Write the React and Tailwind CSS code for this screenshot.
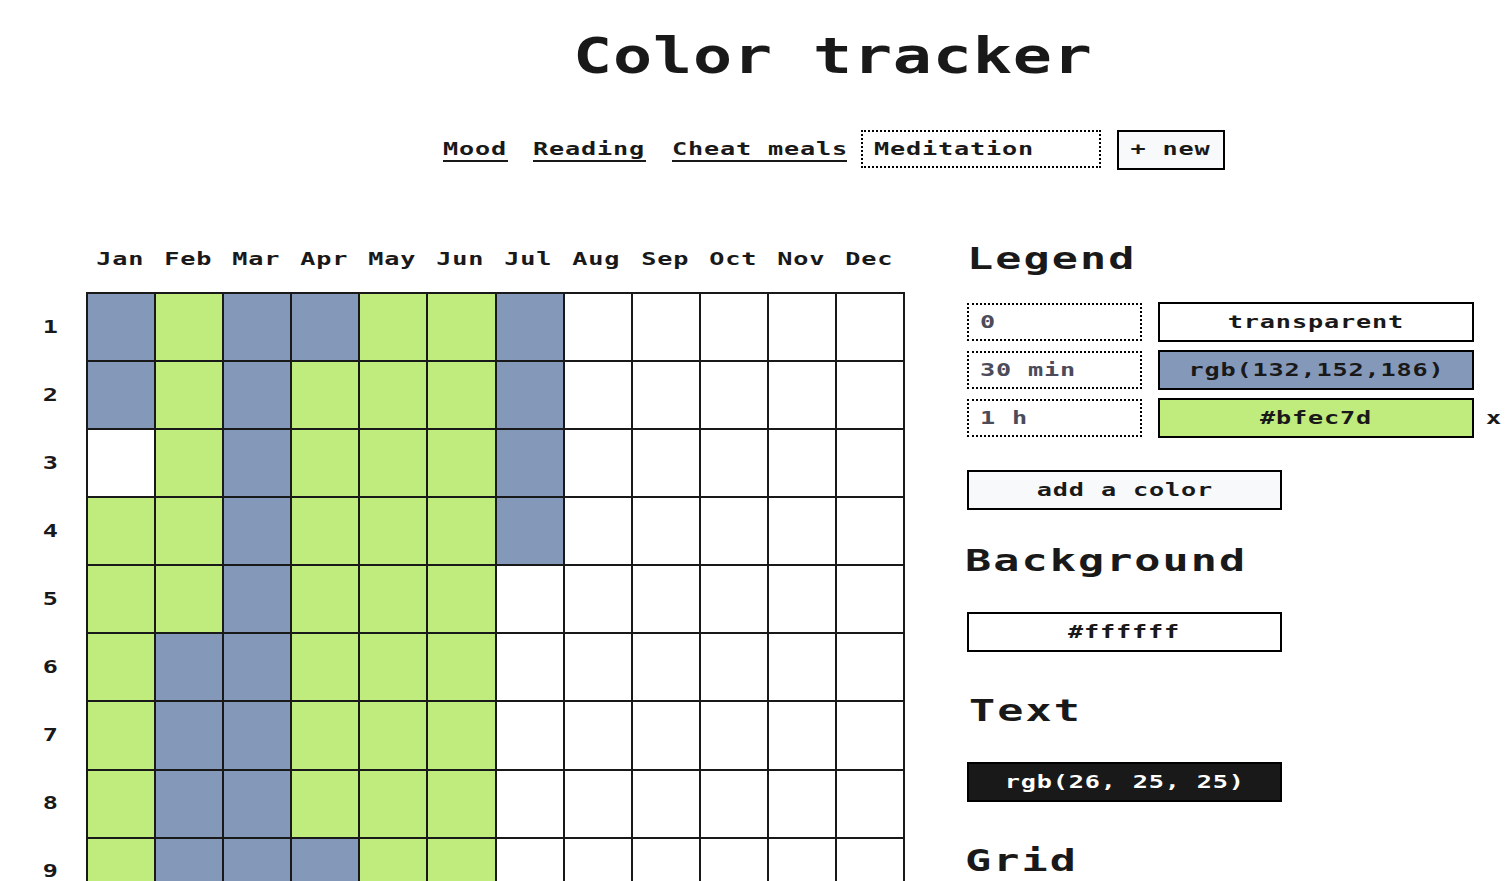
const BLUE = 'bg-[#8498ba]';
const GREEN = 'bg-[#bfec7d]';

const months = ['Jan', 'Feb', 'Mar', 'Apr', 'May', 'Jun', 'Jul', 'Aug', 'Sep', 'Oct', 'Nov', 'Dec'];

// b = 30 min, g = 1 h, . = empty
const rows = [
  'bgbbggb.....',
  'bgbgggb.....',
  '.gbgggb.....',
  'ggbgggb.....',
  'ggbggg......',
  'gbbggg......',
  'gbbggg......',
  'gbbggg......',
  'gbbbgg......',
];

const cellColor = { b: BLUE, g: GREEN, '.': 'bg-white' };

// the pixel font in the picture is much wider than any installed mono
const Wide = ({ children, left }) => (
  <span className={`inline-block whitespace-pre scale-x-[1.4] ${left ? 'origin-left' : 'origin-center'}`}>
    {children}
  </span>
);

const Tab = ({ children, className = '' }) => (
  <a className={`block border-b-2 border-[#1a1919] leading-[21px] h-[24px] ${className}`}>
    <Wide left>{children}</Wide>
  </a>
);

const Heading = ({ children, className = '' }) => (
  <h2 className={`text-[31px] leading-[36px] font-bold tracking-[1.5px] ${className}`}>
    <Wide left>{children}</Wide>
  </h2>
);

const LegendRow = ({ label, color, text, removable }) => (
  <div className="flex items-center">
    <div className="w-[175px] h-[38px] border-2 border-dotted border-black px-[11px] pb-[2px] flex items-center text-[#4b4b5a] mr-[16px]">
      <Wide left>{label}</Wide>
    </div>
    <div className={`w-[316px] h-[40px] border-2 border-black pb-[2px] flex items-center justify-center ${color}`}>
      <Wide>{text}</Wide>
    </div>
    {removable && (
      <span className="ml-[12px] pb-[2px]">
        <Wide left>x</Wide>
      </span>
    )}
  </div>
);

const WideButton = ({ children, className = '' }) => (
  <div className={`w-[315px] h-[40px] border-2 border-black pb-[2px] flex items-center justify-center ${className}`}>
    <Wide>{children}</Wide>
  </div>
);

export default function App() {
  return (
    <div
      className="h-[881px] overflow-hidden bg-white text-[#1a1919] text-[18px] font-bold tracking-[0.6px]"
      style={{ fontFamily: '"DejaVu Sans Mono", monospace' }}
    >
      <h1 className="text-center text-[50px] leading-[60px] font-bold tracking-[0.65px] pt-[26px] ml-[156px]">
        <span className="inline-block scale-x-[1.3]">Color tracker</span>
      </h1>

      <div className="flex items-center justify-center mt-[44px] ml-[158px] h-[40px]">
        <Tab className="w-[65px]">Mood</Tab>
        <div className="w-[25px]" />
        <Tab className="w-[113px]">Reading</Tab>
        <div className="w-[26px]" />
        <Tab className="w-[175px]">Cheat meals</Tab>
        <div className="w-[14px]" />
        <div className="w-[240px] h-[38px] self-start border-2 border-dotted border-black px-[11px] pb-[2px] flex items-center">
          <Wide left>Meditation</Wide>
        </div>
        <div className="w-[16px]" />
        <div className="w-[108px] h-[40px] border-2 border-black bg-[#f8f9fb] pb-[3px] flex items-center justify-center">
          <Wide>+ new</Wide>
        </div>
      </div>

      <div className="flex mt-[70px]">
        <div className="w-[967px] shrink-0">
          <div className="flex pl-[86px] h-[52px] pt-[9px]">
            {months.map(m => (
              <div key={m} className="w-[68.08px] text-center leading-[20px]">
                <Wide>{m}</Wide>
              </div>
            ))}
          </div>
          <div className="flex">
            <div className="w-[86px] shrink-0">
              {rows.map((_, i) => (
                <div key={i} className="h-[68.08px] flex items-center justify-center pl-[16px]">
                  <Wide>{i + 1}</Wide>
                </div>
              ))}
            </div>
            <div className="w-[819px] border-t-2 border-l-2 border-[#1a1919]">
              {rows.map((row, i) => (
                <div key={i} className="grid grid-cols-12 h-[68.08px]">
                  {row.split('').map((c, j) => (
                    <div key={j} className={`border-r-2 border-b-2 border-[#1a1919] ${cellColor[c]}`} />
                  ))}
                </div>
              ))}
            </div>
          </div>
        </div>

        <div className="w-[542px]">
          <Heading className="h-[36px]">Legend</Heading>
          <div className="flex flex-col gap-[8px] mt-[26px]">
            <LegendRow label="0" color="bg-white" text="transparent" />
            <LegendRow label="30 min" color={BLUE} text="rgb(132,152,186)" />
            <LegendRow label="1 h" color={GREEN} text="#bfec7d" removable />
          </div>
          <WideButton className="bg-[#f8f9fb] mt-[32px]">add a color</WideButton>
          <Heading className="mt-[32px] -ml-[2px]">Background</Heading>
          <WideButton className="bg-white mt-[34px]">#ffffff</WideButton>
          <Heading className="mt-[40px] ml-[2px]">Text</Heading>
          <WideButton className="bg-[#1a1919] text-white mt-[34px]">rgb(26, 25, 25)</WideButton>
          <Heading className="mt-[40px] -ml-[2px]">Grid</Heading>
        </div>
      </div>
    </div>
  );
}
